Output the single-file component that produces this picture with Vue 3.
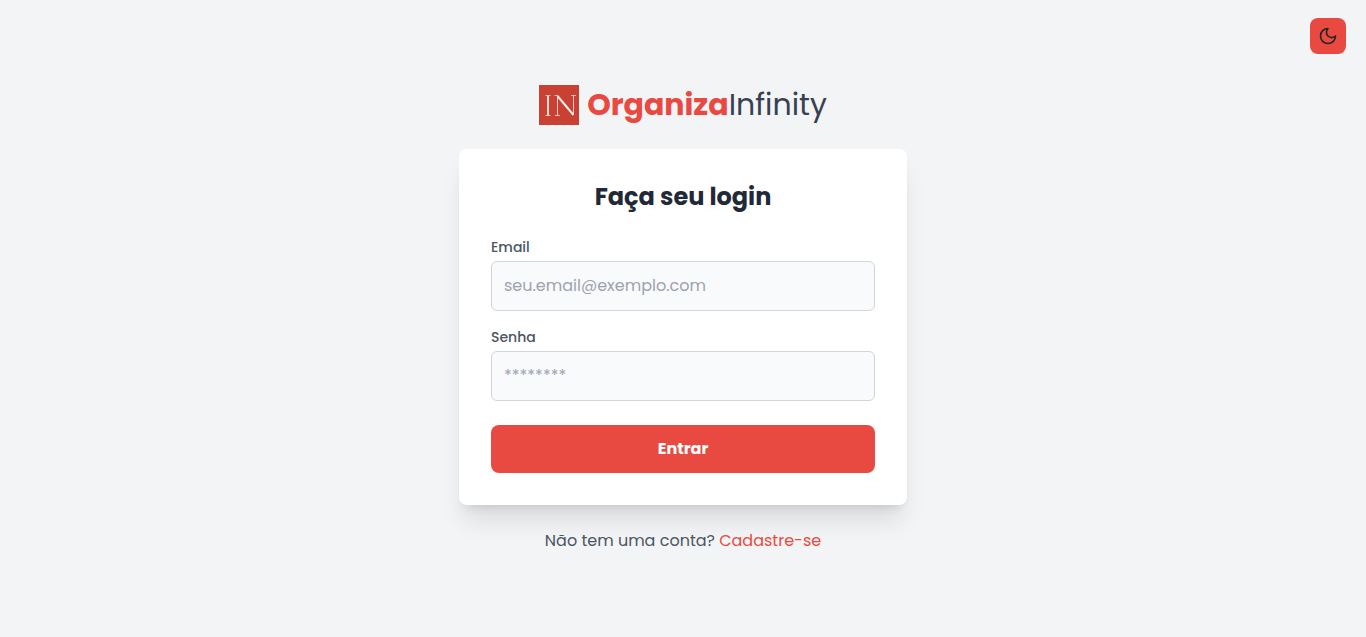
<script setup>
import { ref } from 'vue'

const email = ref('')
const password = ref('')
</script>

<template>
  <main class="page">
    <button class="theme" type="button" aria-label="Alternar tema">
      <svg viewBox="0 0 24 24" width="20" height="20" fill="none" stroke="currentColor" stroke-width="2" stroke-linecap="round" stroke-linejoin="round" aria-hidden="true">
        <path d="M12 3a6 6 0 0 0 9 9 9 9 0 1 1-9-9Z" />
      </svg>
    </button>

    <header class="brand">
      <svg class="mark" viewBox="0 0 40 40" width="40" height="40" aria-hidden="true">
        <rect width="40" height="40" fill="#c84132" />
        <g fill="none" stroke="#fbeeec">
          <path d="M9 10.500V30.500" stroke-width="1.800" />
          <path d="M6.500 10.500h5M6.500 30.500h5" stroke-width="1" opacity=".7" />
          <path d="M18.500 11V30.500M34.500 10.500V30" stroke-width="1" opacity=".8" />
          <path d="M18.500 11L34.500 30" stroke-width="2" />
          <path d="M15.500 10.500h3.500M16 30.500h5M32 10.500h5" stroke-width="1" opacity=".7" />
        </g>
      </svg>
      <h1 class="name"><strong>Organiza</strong><span>Infinity</span></h1>
    </header>

    <section class="card">
      <h2 class="title">Faça seu login</h2>
      <form @submit.prevent>
        <div class="field">
          <label for="email">Email</label>
          <input id="email" v-model="email" type="email" placeholder="seu.email@exemplo.com" />
        </div>
        <div class="field">
          <label for="password">Senha</label>
          <input id="password" v-model="password" type="password" placeholder="********" />
        </div>
        <button class="submit" type="submit">Entrar</button>
      </form>
    </section>

    <p class="signup">Não tem uma conta? <a href="#">Cadastre-se</a></p>
  </main>
</template>

<style>
body {
  margin: 0;
  background: #f3f4f6;
}
</style>

<style scoped>
.page {
  box-sizing: border-box;
  min-height: 100vh;
  padding: 16px;
  display: flex;
  flex-direction: column;
  align-items: center;
  justify-content: center;
  gap: 24px;
  background: #f3f4f6;
  color: #4b5563;
  font-family: Poppins, Inter, "Liberation Sans", sans-serif;
  font-size: 16px;
  line-height: 24px;
}

.theme {
  position: absolute;
  top: 18px;
  right: 20px;
  display: flex;
  padding: 8px;
  border: 0;
  border-radius: 8px;
  background: #e84a41;
  color: #262626;
  cursor: pointer;
}

.brand {
  display: flex;
  align-items: center;
  gap: 8px;
}

.mark {
  display: block;
}

.name {
  margin: 0;
  font-size: 30px;
  font-weight: 400;
  line-height: 36px;
  color: #374151;
}

.name strong {
  font-weight: 700;
  color: #e84a41;
}

.card {
  box-sizing: border-box;
  width: 100%;
  max-width: 448px;
  padding: 32px;
  border-radius: 8px;
  background: #fff;
  box-shadow: 0 20px 25px -5px rgba(0, 0, 0, 0.1), 0 8px 10px -6px rgba(0, 0, 0, 0.1);
}

.title {
  margin: 0 0 24px;
  font-size: 24px;
  font-weight: 700;
  line-height: 32px;
  text-align: center;
  color: #1f2937;
}

.field {
  display: flex;
  flex-direction: column;
  gap: 4px;
  margin-bottom: 16px;
}

.field label {
  font-size: 14px;
  font-weight: 500;
  line-height: 20px;
}

.field input {
  box-sizing: border-box;
  width: 100%;
  height: 50px;
  padding: 12px;
  border: 1px solid #d1d5db;
  border-radius: 6px;
  background: #f9fafb;
  color: #1f2937;
  font: inherit;
}

.field input::placeholder {
  color: #9ca3af;
  opacity: 1;
}

.submit {
  display: block;
  width: 100%;
  margin-top: 24px;
  padding: 12px 16px;
  border: 0;
  border-radius: 8px;
  background: #e84a41;
  color: #fff;
  font: inherit;
  font-weight: 700;
  cursor: pointer;
}

.signup {
  margin: 0;
}

.signup a {
  color: #e84a41;
  text-decoration: none;
}
</style>
